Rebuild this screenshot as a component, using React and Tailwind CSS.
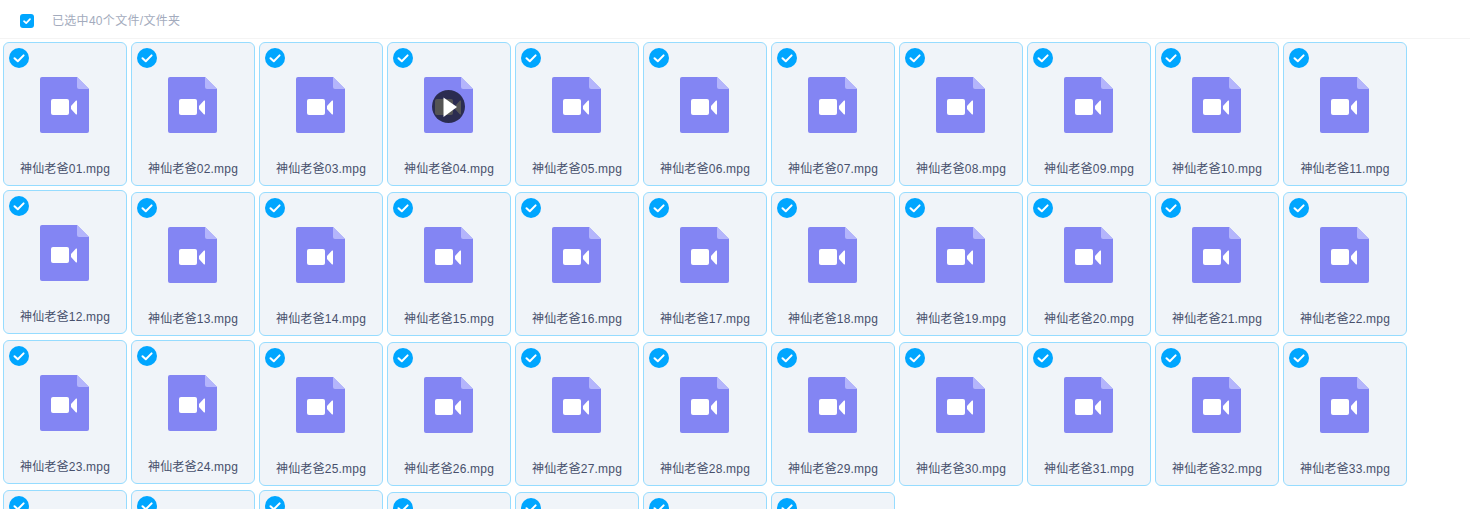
const FONT = "font-['Liberation_Sans','Noto_Sans_CJK_SC',sans-serif]";

function CheckBadge() {
  return (
    <svg className="absolute left-[5px] top-[5px]" width="20" height="20" viewBox="0 0 20 20">
      <circle cx="10" cy="10" r="10" fill="#00a6ff" />
      <path d="M5.5 10.2 L8.8 13.3 L14.6 7.4" fill="none" stroke="#fff" strokeWidth="2" strokeLinecap="round" strokeLinejoin="round" />
    </svg>
  );
}

function VideoFile() {
  return (
    <svg width="49" height="56" viewBox="0 0 49 56" className="block">
      <path d="M2 0 H37 L49 12 V54 A2 2 0 0 1 47 56 H2 A2 2 0 0 1 0 54 V2 A2 2 0 0 1 2 0 Z" fill="#8385f3" />
      <path d="M37 0 L49 12 H39 A2 2 0 0 1 37 10 Z" fill="#b4b5fc" />
      <rect x="11" y="22" width="18" height="16" rx="2" fill="#fff" />
      <path d="M31 29 L36 23.6 A0.6 0.6 0 0 1 37 24 V37 A0.6 0.6 0 0 1 36 37.4 L31 32 Z" fill="#fff" />
    </svg>
  );
}

function PlayOverlay() {
  return (
    <svg className="absolute left-[8px] top-[13px]" width="33" height="33" viewBox="0 0 33 33">
      <circle cx="16.5" cy="16.5" r="16.5" fill="#000" fillOpacity="0.67" />
      <path d="M11.5 7.5 L25 17 L11.5 27 Z" fill="#fff" />
    </svg>
  );
}

function Card({ n, offset }) {
  const name = String(n).padStart(2, "0");
  return (
    <div className={`relative h-[144px] w-[124px] rounded-[6px] border border-[#96dcff] bg-[#f0f4f9] flex flex-col items-center pt-[34px] ${offset ? "-mt-[2px]" : ""}`}>
      <CheckBadge />
      <div className="relative -ml-px">
        <VideoFile />
        {n === 4 && <PlayOverlay />}
      </div>
      <div className="mt-[27px] text-[12px] leading-[18px] tracking-[0.2px] text-[#47506c] whitespace-nowrap">
        神仙老爸{name}.mpg
      </div>
    </div>
  );
}

const OFFSET = new Set([12, 23, 24, 34, 35, 36]);

export default function App() {
  const cards = Array.from({ length: 40 }, (_, i) => i + 1);
  return (
    <div className={`h-[509px] w-[1470px] overflow-hidden bg-white ${FONT}`}>
      <div className="h-[39px] border-b border-[#f4f4f4] flex items-center pl-[20px] pt-[4px]">
        <span className="flex h-[14px] w-[14px] items-center justify-center rounded-[3px] bg-[#00a6ff]">
          <svg width="10" height="10" viewBox="0 0 10 10">
            <path d="M2 5.2 L4.2 7.2 L8 3.2" fill="none" stroke="#fff" strokeWidth="1.7" strokeLinecap="round" strokeLinejoin="round" />
          </svg>
        </span>
        <span className="ml-[18px] text-[12px] tracking-[0.3px] text-[#a3abbd]">已选中40个文件/文件夹</span>
      </div>
      <div className="mt-[3px] ml-[3px] grid grid-cols-[repeat(11,124px)] gap-x-1 gap-y-[6px]">
        {cards.map((n) => (
          <Card key={n} n={n} offset={OFFSET.has(n)} />
        ))}
      </div>
    </div>
  );
}
